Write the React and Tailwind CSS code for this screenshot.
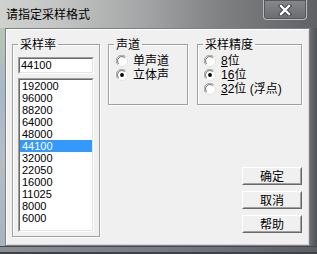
const RATES = ['192000', '96000', '88200', '64000', '48000', '44100', '32000', '22050', '16000', '11025', '8000', '6000'];

const cjk = { fontFamily: '"Noto Sans CJK SC", "Liberation Sans", sans-serif' };
const num = { fontFamily: '"Liberation Sans", "Noto Sans CJK SC", sans-serif' };

function Radio({ checked }) {
  return (
    <svg width="12" height="12" viewBox="0 0 12 12" className="shrink-0">
      <circle cx="6" cy="6" r="5.5" fill="#fff" stroke="#e3e3e3" />
      <path d="M1.8 9.6A5.3 5.3 0 0 1 9.6 1.8" fill="none" stroke="#a0a0a0" />
      <path d="M2.8 8.8A4.2 4.2 0 0 1 8.8 2.8" fill="none" stroke="#696969" />
      {checked && <circle cx="6" cy="6" r="1.9" fill="#000" />}
    </svg>
  );
}

function Option({ checked, children }) {
  return (
    <div className="flex items-center h-[14px] gap-[5px] text-[12px] text-black" style={num}>
      <Radio checked={checked} />
      <span className="leading-[14px] whitespace-nowrap">{children}</span>
    </div>
  );
}

function Group({ title, className, children }) {
  return (
    <fieldset className={`border border-[#a0a0a0] shadow-[inset_1px_1px_0_#fff,1px_1px_0_#fff] px-[5px] pb-[4px] ${className}`}>
      <legend className="px-[2px] text-[12px] leading-[14px] text-black" style={cjk}>{title}</legend>
      {children}
    </fieldset>
  );
}

function Button({ children }) {
  return (
    <button className="w-[60px] h-[18px] border border-t-white border-l-white border-r-[#696969] border-b-[#696969] bg-[#f0f0f0]">
      <div className="h-full flex items-center justify-center border border-t-[#f0f0f0] border-l-[#f0f0f0] border-r-[#a0a0a0] border-b-[#a0a0a0] text-[12px] text-black leading-none" style={cjk}>
        {children}
      </div>
    </button>
  );
}

export default function App() {
  return (
    <div className="w-[317px] h-[254px] flex flex-col overflow-hidden bg-[linear-gradient(90deg,#cfd2cf_0%,#c2c4c3_20%,#a3a5a6_45%,#7e8082_70%,#5f6164_100%)]">
      {/* title bar */}
      <div className="h-[28px] flex items-start justify-between shrink-0">
        <span className="pl-[6px] pt-[6px] text-[12px] leading-[16px] text-black" style={cjk}>请指定采样格式</span>
        <div className="mr-[10px] w-[44px] h-[20px] rounded-b-[4px] border border-t-0 border-[#b7b9bc] bg-[linear-gradient(180deg,#86888b,#6a6c70)] shadow-[inset_0_0_0_1px_#55575a] flex items-center justify-center">
          <svg width="14" height="12" viewBox="0 0 14 12">
            <path d="M3 2L11 10M11 2L3 10" stroke="#3b3d40" strokeWidth="4.2" strokeLinecap="square" />
            <path d="M3 2L11 10M11 2L3 10" stroke="#fff" strokeWidth="2.4" strokeLinecap="square" />
          </svg>
        </div>
      </div>

      <div className="flex flex-1 min-h-0">
        {/* left frame */}
        <div className="w-[5px] bg-[linear-gradient(180deg,#b8c6b4_0%,#a9b7c6_30%,#b6bec4_60%,#aab3ba_100%)]" />

        {/* client area */}
        <div className="w-[305px] border border-[#7e8185] bg-[#f0f0f0] shadow-[inset_1px_1px_0_#fff,inset_-1px_-1px_0_#d5d5d5]">
          <div className="flex pl-[6px] pt-[8px]">
            <Group title="采样率" className="w-[88px]">
              <div className="mt-[6px] h-[17px] border border-t-[#a0a0a0] border-l-[#a0a0a0] border-r-white border-b-white">
                <div className="h-full bg-white border border-t-[#696969] border-l-[#696969] border-r-[#e3e3e3] border-b-[#e3e3e3] pl-[1px] text-[11px] leading-[13px] text-black" style={num}>
                  44100
                </div>
              </div>
              <div className="mt-[4px] h-[154px] border border-t-[#a0a0a0] border-l-[#a0a0a0] border-r-white border-b-white">
                <div className="h-full bg-white border border-t-[#696969] border-l-[#696969] border-r-[#e3e3e3] border-b-[#e3e3e3]">
                  {RATES.map((r) => (
                    <div
                      key={r}
                      className={`h-[12px] pl-[2px] text-[11px] leading-[12px] ${r === '44100' ? 'bg-[#3399ff] text-white' : 'text-black'}`}
                      style={num}
                    >
                      {r}
                    </div>
                  ))}
                </div>
              </div>
            </Group>

            <div className="flex flex-col ml-[8px]">
              <div className="flex gap-[9px]">
                <Group title="声道" className="w-[80px] h-[68px]">
                  <div className="mt-[3px] pl-[2px]">
                    <Option>单声道</Option>
                    <Option checked>立体声</Option>
                  </div>
                </Group>
                <Group title="采样精度" className="w-[105px] h-[68px]">
                  <div className="mt-[3px] pl-[1px]">
                    <Option><span className="underline">8</span>位</Option>
                    <Option checked>1<span className="underline">6</span>位</Option>
                    <Option><span className="underline">3</span>2位 (浮点)</Option>
                  </div>
                </Group>
              </div>
              <div className="mt-[62px] flex flex-col items-end gap-[6px]">
                <Button>确定</Button>
                <Button>取消</Button>
                <Button>帮助</Button>
              </div>
            </div>
          </div>
        </div>

        {/* right frame */}
        <div className="flex-1 bg-[linear-gradient(90deg,#6a6d71,#4f5256)]" />
      </div>

      {/* bottom frame */}
      <div className="h-[8px] shrink-0 border-t border-[#45484d] bg-[linear-gradient(90deg,#8a8e95_0%,#767a82_50%,#5c5f66_100%)] shadow-[inset_0_-2px_0_#3e4146]" />
    </div>
  );
}
